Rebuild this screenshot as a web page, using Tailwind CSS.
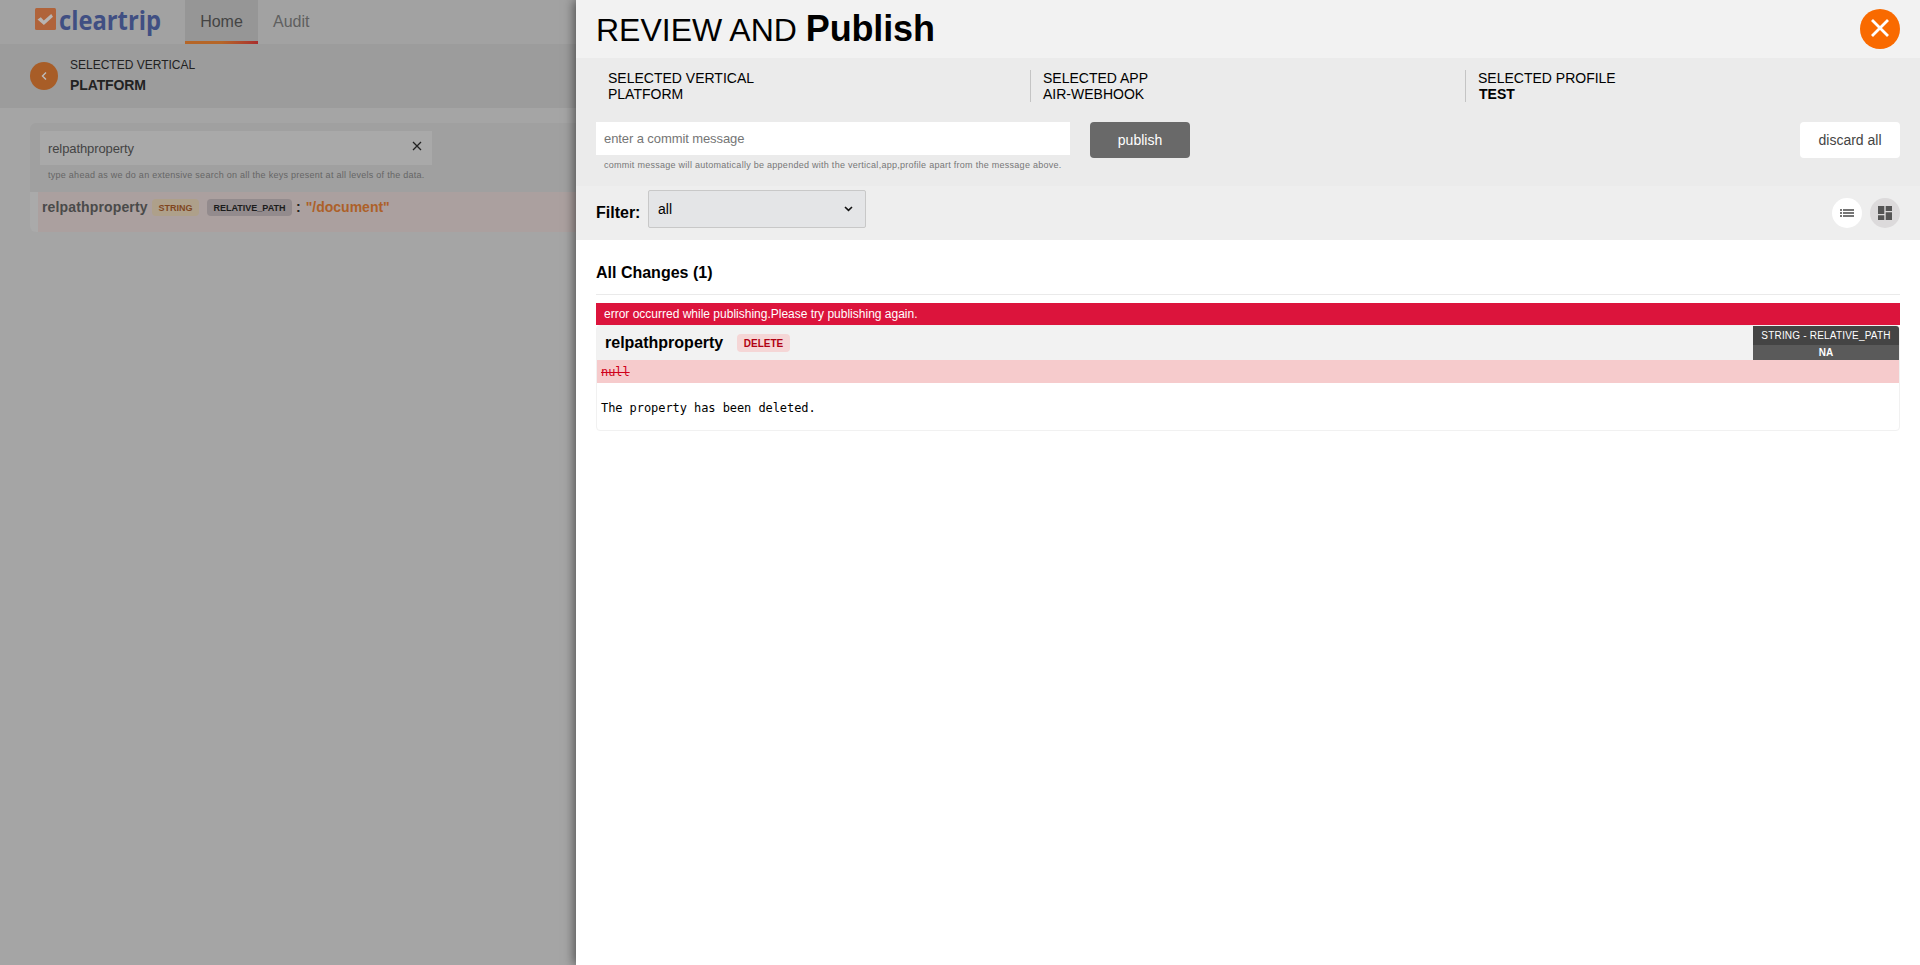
<!DOCTYPE html>
<html lang="en">
<head>
<meta charset="utf-8">
<title>Cleartrip - Review and Publish</title>
<script src="https://cdn.jsdelivr.net/npm/@tailwindcss/browser@4"></script>
</head>
<body class="flex h-[965px] overflow-hidden bg-white font-['Liberation_Sans',Arial,sans-serif] text-black">

<!-- Dimmed page behind the drawer -->
<div class="flex w-[576px] shrink-0 flex-col bg-[#a5a5a5]">
  <header class="flex h-11 shrink-0 bg-[#a2a2a2] pl-[35px]">
    <div class="w-[150px] shrink-0">
      <svg class="overflow-visible" width="130" height="44" viewBox="0 0 130 44">
        <rect x="0" y="8" width="21" height="22" rx="1.5" fill="#b0633a"/>
        <path d="M2.5 19.5 L5.8 17.2 L8.8 20.4 L16.2 14 L18 16.8 L8.9 25 Z" fill="#b8b4b2"/>
        <text x="24" y="29.5" font-family="Open Sans" font-weight="700" font-size="27" fill="#404f83" textLength="102" lengthAdjust="spacingAndGlyphs">cleartrip</text>
      </svg>
    </div>
    <nav class="flex text-base">
      <div class="flex h-11 w-[73px] flex-col bg-[#969696] text-[#444]">
        <div class="h-[41px] text-center leading-[43px]">Home</div>
        <div class="h-[3px] bg-linear-to-r from-[#b56628] from-50% to-[#a82d2d]"></div>
      </div>
      <div class="pl-[15px] leading-[43px] text-[#5f5f5f]">Audit</div>
    </nav>
  </header>

  <div class="flex h-16 shrink-0 items-center bg-[#9c9c9c] pl-[30px]">
    <div class="flex size-7 items-center justify-center rounded-full bg-[#a85d27]">
      <svg width="10" height="10" viewBox="0 0 10 10" fill="none" stroke="#bdbdbd" stroke-width="1.4"><path d="M7 1.5 L3.5 5 L7 8.5"/></svg>
    </div>
    <div class="-mt-px pl-3 text-[#222]">
      <div class="text-xs leading-[19px]">SELECTED VERTICAL</div>
      <div class="text-sm leading-[20px] font-bold tracking-[-0.1px]">PLATFORM</div>
    </div>
  </div>

  <div class="pt-[15px] pl-[30px]">
    <div class="h-[69px] rounded-tl-md bg-[#a0a0a0] pt-2 pl-[10px]">
      <div class="flex h-[34px] w-[392px] items-center justify-between bg-[#a9a9a9] pr-[10px] pl-2">
        <span class="pt-[2px] text-[13px] tracking-[-0.1px] text-[#444]">relpathproperty</span>
        <svg class="-mt-1" width="10" height="10" viewBox="0 0 10 10" stroke="#222" stroke-width="1.3"><path d="M1 1 L9 9 M9 1 L1 9"/></svg>
      </div>
      <p class="pl-2 text-[9px] leading-[20px] tracking-[0.265px] whitespace-nowrap text-[#666]">type ahead as we do an extensive search on all the keys present at all levels of the data.</p>
    </div>
    <div class="flex h-10 rounded-bl-md border-l-8 border-[#aaa] bg-[#aba09f] pt-[7px] pl-1 text-sm leading-[17px] font-bold">
      <span class="w-[110px] tracking-[0.15px] text-[#4a4a4a]">relpathproperty</span>
      <span class="h-[17px] w-[47px] rounded bg-[#aea08a] text-center text-[9px] leading-[18px] text-[#80461f]">STRING</span>
      <span class="ml-2 h-[17px] w-[85px] rounded bg-[#938b8d] text-center text-[9px] leading-[18px] text-[#1c1c1c]">RELATIVE_PATH</span>
      <span class="pl-1 text-[#222]">:</span>
      <span class="pl-[5px] text-[#ad6029]">"/document"</span>
    </div>
  </div>
</div>

<!-- Review drawer -->
<main class="relative flex w-[1344px] flex-col bg-white shadow-[-2px_0_10px_rgba(0,0,0,0.5)]">
  <header class="flex h-[58px] shrink-0 items-center justify-between bg-[#f2f2f2] px-5">
    <h1 class="text-[32px] leading-[56px]">REVIEW AND <b class="text-[36px] tracking-[-0.15px]">Publish</b></h1>
    <button class="flex size-10 items-center justify-center rounded-full bg-[#f96a00]">
      <svg class="-mt-[3px]" width="18" height="18" viewBox="0 0 18 18" stroke="#fff" stroke-width="2.8"><path d="M1 1 L17 17 M17 1 L1 17"/></svg>
    </button>
  </header>

  <section class="h-32 shrink-0 bg-[#ebebeb] px-5 pt-3">
    <div class="flex h-8 text-sm leading-4">
      <div class="w-[434px] pl-3">SELECTED VERTICAL<br>PLATFORM</div>
      <div class="w-[435px] border-l border-[#c4c4c4] pl-3">SELECTED APP<br>AIR-WEBHOOK</div>
      <div class="border-l border-[#c4c4c4] pl-3">SELECTED PROFILE<br><b class="pl-px">TEST</b></div>
    </div>
    <div class="mt-[20px] flex">
      <div class="w-[474px]">
        <div class="h-[33px] bg-white pl-2 text-[13px] leading-[33px] tracking-[-0.09px] text-[#757575]">enter a commit message</div>
        <p class="pl-2 text-[9px] leading-[20px] tracking-[0.27px] whitespace-nowrap text-[#777]">commit message will automatically be appended with the vertical,app,profile apart from the message above.</p>
      </div>
      <button class="ml-5 h-9 w-[100px] rounded bg-[#696969] text-sm text-white">publish</button>
      <button class="ml-auto h-9 w-[100px] rounded bg-white text-sm text-[#444]">discard all</button>
    </div>
  </section>

  <section class="flex h-[54px] shrink-0 items-start bg-[#eee] px-5 pt-1">
    <div class="w-[52px] pt-[9px] text-base leading-[27px] font-bold">Filter:</div>
    <div class="flex h-[38px] w-[218px] items-center justify-between rounded-xs border border-[#c8c8c8] bg-[#e4e5e7] pr-3 pl-[9px] text-sm">
      <span>all</span>
      <svg width="9" height="6" viewBox="0 0 9 6" fill="none" stroke="#111" stroke-width="1.6"><path d="M1 1 L4.5 4.4 L8 1"/></svg>
    </div>
    <div class="mt-2 ml-auto flex gap-2">
      <div class="flex size-[30px] items-center justify-center rounded-full bg-white">
        <svg width="14" height="8" viewBox="0 0 14 8" fill="#757575"><path d="M0 0h2v2H0zM3 0h11v2H3zM0 3h2v2H0zM3 3h11v2H3zM0 6h2v2H0zM3 6h11v2H3z"/></svg>
      </div>
      <div class="flex size-[30px] items-center justify-center rounded-full bg-[#dcdadb]">
        <svg width="14" height="14" viewBox="0 0 14 14" fill="#555"><path d="M0 0h6.3v8H0zM7.7 0H14v5H7.7zM0 9.3h6.3V14H0zM7.7 6.2H14V14H7.7z"/></svg>
      </div>
    </div>
  </section>

  <section class="px-5">
    <h2 class="h-[55px] border-b border-[#eaeaea] text-base leading-[66px] font-bold">All Changes (1)</h2>
    <div class="mt-2 h-[22px] bg-[#dc143c] pl-2 text-xs leading-[22px] text-white">error occurred while publishing.Please try publishing again.</div>
    <article class="h-[106px] overflow-hidden rounded border border-[#f1f1f1]">
      <div class="flex h-[34px] items-start bg-[#f2f2f2] pl-2">
        <h3 class="w-[132px] text-base leading-[33px] font-bold">relpathproperty</h3>
        <span class="mt-2 h-[18px] w-[53px] rounded bg-[#f5d6d6] text-center text-[10px] leading-[19px] font-bold text-[#b00012]">DELETE</span>
        <div class="ml-auto w-[146px] text-center text-[10px] text-white">
          <div class="h-[19px] bg-[#444] leading-[19px] tracking-[0.2px] whitespace-nowrap">STRING - RELATIVE_PATH</div>
          <div class="h-[15px] bg-[#5a5a5a] leading-[15px] font-bold">NA</div>
        </div>
      </div>
      <div class="h-[23px] bg-[#f6cbcc] pl-1 font-['DejaVu_Sans_Mono',monospace] text-xs leading-[24px] tracking-[-0.07px] text-[#d0021b]"><s>null</s></div>
      <p class="pt-[13px] pl-1 font-['DejaVu_Sans_Mono',monospace] text-xs leading-[24px] tracking-[-0.07px]">The property has been deleted.</p>
    </article>
  </section>
</main>
</body>
</html>
